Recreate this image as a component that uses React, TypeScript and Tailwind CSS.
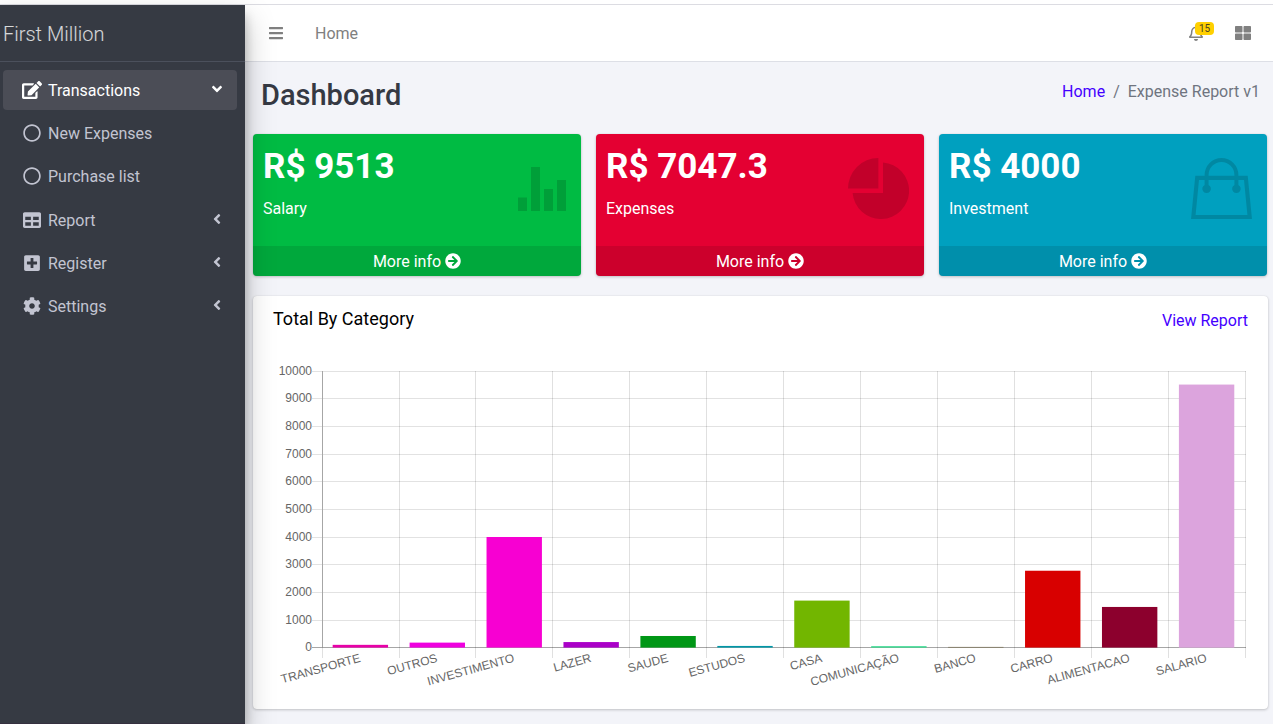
import React from "react";
import type { ReactNode } from "react";
import {
  FaAngleDown,
  FaAngleLeft,
  FaArrowCircleRight,
  FaBars,
  FaCog,
  FaEdit,
  FaPlusSquare,
  FaRegBell,
  FaRegCircle,
  FaTable,
  FaThLarge,
} from "react-icons/fa";

type NavEntryProps = {
  icon: ReactNode;
  label: string;
  active?: boolean;
  arrow?: "down" | "left";
};

function NavEntry({ icon, label, active = false, arrow }: NavEntryProps) {
  return (
    <a
      href="#"
      className={
        active
          ? "flex h-10 items-center rounded bg-[#4b4d56] pr-3 pl-[15px] text-white"
          : "flex h-10 items-center rounded pr-3 pl-[15px] text-[#c2c4d1]"
      }
    >
      <span className="mr-[3px] flex w-[27px] justify-center text-[18px]">{icon}</span>
      <span className="flex-1 pt-0.5">{label}</span>
      <span className="pb-0.5" aria-hidden="true">
        {arrow === "down" && <FaAngleDown />}
        {arrow === "left" && <FaAngleLeft />}
      </span>
    </a>
  );
}

function Sidebar() {
  return (
    <aside className="z-10 flex w-[245px] shrink-0 flex-col border-b border-[#35303f] bg-[#363a43] shadow-[0_14px_28px_rgba(0,0,0,0.25),0_10px_10px_rgba(0,0,0,0.22)]">
      <a
        href="#"
        className="flex h-[57px] items-center border-b border-[#4b505c] pt-0.5 pl-[3px] text-xl font-light text-white/80"
      >
        First Million
      </a>
      <nav className="pt-2 pr-2 pl-[3px]">
        <ul className="flex flex-col gap-[3px]">
          <li className="pb-px">
            <NavEntry icon={<FaEdit className="size-5" />} label="Transactions" active arrow="down" />
            <ul className="mt-[3px] flex flex-col gap-[3px]">
              <li>
                <NavEntry icon={<FaRegCircle />} label="New Expenses" />
              </li>
              <li>
                <NavEntry icon={<FaRegCircle />} label="Purchase list" />
              </li>
            </ul>
          </li>
          <li>
            <NavEntry icon={<FaTable />} label="Report" arrow="left" />
          </li>
          <li>
            <NavEntry icon={<FaPlusSquare />} label="Register" arrow="left" />
          </li>
          <li>
            <NavEntry icon={<FaCog />} label="Settings" arrow="left" />
          </li>
        </ul>
      </nav>
    </aside>
  );
}

function TopBar() {
  return (
    <header className="flex h-[57px] items-center border-b border-[#dddfe6] bg-white pr-[22px] pl-[23px] text-[#808080]">
      <button type="button" aria-label="Toggle menu">
        <FaBars />
      </button>
      <a href="#" className="ml-[31px] pt-0.5">
        Home
      </a>
      <div className="ml-auto flex items-center gap-[31px]">
        <button type="button" aria-label="Notifications" className="relative">
          <FaRegBell className="size-4" />
          <span className="absolute -top-[3px] left-[7px] rounded bg-[#ffd000] px-1 text-[10px] leading-[13px] text-[#4b4320]">
            15
          </span>
        </button>
        <button type="button" aria-label="Control panel">
          <FaThLarge className="size-4" />
        </button>
      </div>
    </header>
  );
}

function StatsBarsIcon() {
  return (
    <svg width="48" height="44" viewBox="0 0 48 44" fill="currentColor" aria-hidden="true">
      <path d="M0 30.5h9V44H0zM13 0h9v44h-9zM26 22h9v22h-9zM39 13h9v31h-9z" />
    </svg>
  );
}

function PieGraphIcon() {
  return (
    <svg width="61" height="61" viewBox="0 0 61 61" fill="currentColor" aria-hidden="true">
      <path d="M30.4 0v30.6H0A30.4 30.6 0 0 1 30.4 0z" />
      <path d="M35 4.5A28.3 28.3 0 1 1 4.6 35H35z" />
    </svg>
  );
}

function BagIcon() {
  return (
    <svg width="61" height="61" viewBox="0 0 61 61" aria-hidden="true">
      <path
        fill="currentColor"
        fillRule="evenodd"
        d="M4.3 17.8H13.6V17A16.9 17 0 0 1 47.4 17V17.8H56.7L61 61H0zM17.6 17.8H43.4V17A12.9 13 0 0 0 17.6 17zM8 22L4.6 57H56.4L53 22H47.4V26.9A4.3 4.3 0 1 1 43.4 26.9V22H17.6V26.9A4.3 4.3 0 1 1 13.6 26.9V22z"
      />
    </svg>
  );
}

type StatBoxProps = {
  value: string;
  label: string;
  color: string;
  icon: ReactNode;
};

function StatBox({ value, label, color, icon }: StatBoxProps) {
  return (
    <section
      className={`flex flex-col overflow-hidden rounded text-white shadow-[0_0_1px_rgba(0,0,0,0.125),0_1px_3px_rgba(0,0,0,0.2)] ${color}`}
    >
      <div className="flex h-28 justify-between pr-[15px] pl-[10px]">
        <div className="pt-3">
          <h3 className="text-[35px] leading-[42px] font-bold">{value}</h3>
          <p className="mt-[9px]">{label}</p>
        </div>
        <div className="flex items-center pb-[3px] text-black/15">{icon}</div>
      </div>
      <a href="#" className="flex h-[30px] items-center justify-center gap-1 bg-black/10">
        <span className="pt-0.5">More info</span>
        <FaArrowCircleRight aria-hidden="true" />
      </a>
    </section>
  );
}

const categories = [
  { name: "TRANSPORTE", value: 100, color: "#e800a8" },
  { name: "OUTROS", value: 180, color: "#ef00df" },
  { name: "INVESTIMENTO", value: 4000, color: "#f700d2" },
  { name: "LAZER", value: 200, color: "#aa00c8" },
  { name: "SAUDE", value: 420, color: "#009716" },
  { name: "ESTUDOS", value: 60, color: "#0097a7" },
  { name: "CASA", value: 1700, color: "#72b600" },
  { name: "COMUNICAÇÃO", value: 50, color: "#2bd98a" },
  { name: "BANCO", value: 25, color: "#7a6f52" },
  { name: "CARRO", value: 2780, color: "#d80000" },
  { name: "ALIMENTACAO", value: 1470, color: "#8c002d" },
  { name: "SALARIO", value: 9513, color: "#dca4dd" },
];

const plot = { left: 49.1, top: 9.7, band: 76.93, step: 27.65, bottom: 286.6 };

function CategoryChart() {
  const columns = Array.from({ length: 13 }, (_, i) => Math.floor(plot.left + plot.band * i) + 0.5);
  const rows = Array.from({ length: 11 }, (_, i) => Math.round(plot.top + plot.step * i) + 0.5);
  const barWidth = plot.band * 0.72;

  return (
    <svg
      viewBox="0 0 975 328"
      className="block w-full"
      role="img"
      aria-label="Total by category"
      fontFamily="'Liberation Sans', Arial, sans-serif"
      fontSize="12"
    >
      {rows.map((y, i) => (
        <g key={i}>
          <line x1="39" x2="973" y1={y} y2={y} stroke={i === 10 ? "#a6a6a6" : "#e2e2e2"} />
          <text x="39" y={y + 3.5} textAnchor="end" fill="#666666">
            {10000 - i * 1000}
          </text>
        </g>
      ))}
      {columns.map((x, i) => (
        <g key={i}>
          <line x1={x} x2={x} y1="10" y2="297" stroke="#000000" strokeOpacity="0.12" />
          {i === 0 && <line x1={x} x2={x} y1="10" y2="286" stroke="#a6a6a6" />}
        </g>
      ))}
      {categories.map((c, i) => {
        const start = plot.left - 0.2 + plot.band * i;
        const height = (c.value / 1000) * plot.step;
        const labelX = start + 0.8 + plot.band / 2;
        return (
          <g key={c.name}>
            <rect
              x={start + plot.band * 0.14}
              y={plot.bottom - height}
              width={barWidth}
              height={height}
              fill={c.color}
            />
            <text
              x={labelX}
              y="300.5"
              textAnchor="end"
              fill="#666666"
              transform={`rotate(-15.5 ${labelX} 300.5)`}
            >
              {c.name}
            </text>
          </g>
        );
      })}
    </svg>
  );
}

export default function App() {
  return (
    <div className="flex min-h-screen flex-col bg-white pt-1 font-['Roboto',sans-serif] text-base">
      <div className="flex flex-1">
        <div className="z-10 flex border-t border-[#dcdce2]">
          <Sidebar />
        </div>
        <div className="flex min-w-0 flex-1 flex-col border-t border-[#dcdce2] bg-[#f3f4f9]">
          <TopBar />
          <main className="pr-[5px] pb-[14px] pl-2">
            <div className="flex h-[72px] items-start justify-between pt-[15px] pr-2 pl-2">
              <h1 className="text-[29px] leading-9 font-medium text-[#353943]">Dashboard</h1>
              <nav aria-label="Breadcrumb" className="flex gap-2 pt-[3px] text-[#6f7480]">
                <a href="#" className="text-[#4400ff]">
                  Home
                </a>
                <span>/</span>
                <span>Expense Report v1</span>
              </nav>
            </div>
            <div className="grid grid-cols-3 gap-[15px] pr-px">
              <StatBox value="R$ 9513" label="Salary" color="bg-[#00bb43]" icon={<StatsBarsIcon />} />
              <StatBox value="R$ 7047.3" label="Expenses" color="bg-[#e40032]" icon={<PieGraphIcon />} />
              <StatBox value="R$ 4000" label="Investment" color="bg-[#00a0bf]" icon={<BagIcon />} />
            </div>
            <section className="mt-5 rounded bg-white px-5 pb-5 shadow-[0_0_1px_rgba(0,0,0,0.125),0_1px_3px_rgba(0,0,0,0.2)]">
              <div className="flex h-[65px] items-start justify-between pt-[13px]">
                <h2 className="text-lg leading-5">Total By Category</h2>
                <a href="#" className="text-[#4400ff]">
                  View Report
                </a>
              </div>
              <CategoryChart />
            </section>
          </main>
        </div>
      </div>
    </div>
  );
}
